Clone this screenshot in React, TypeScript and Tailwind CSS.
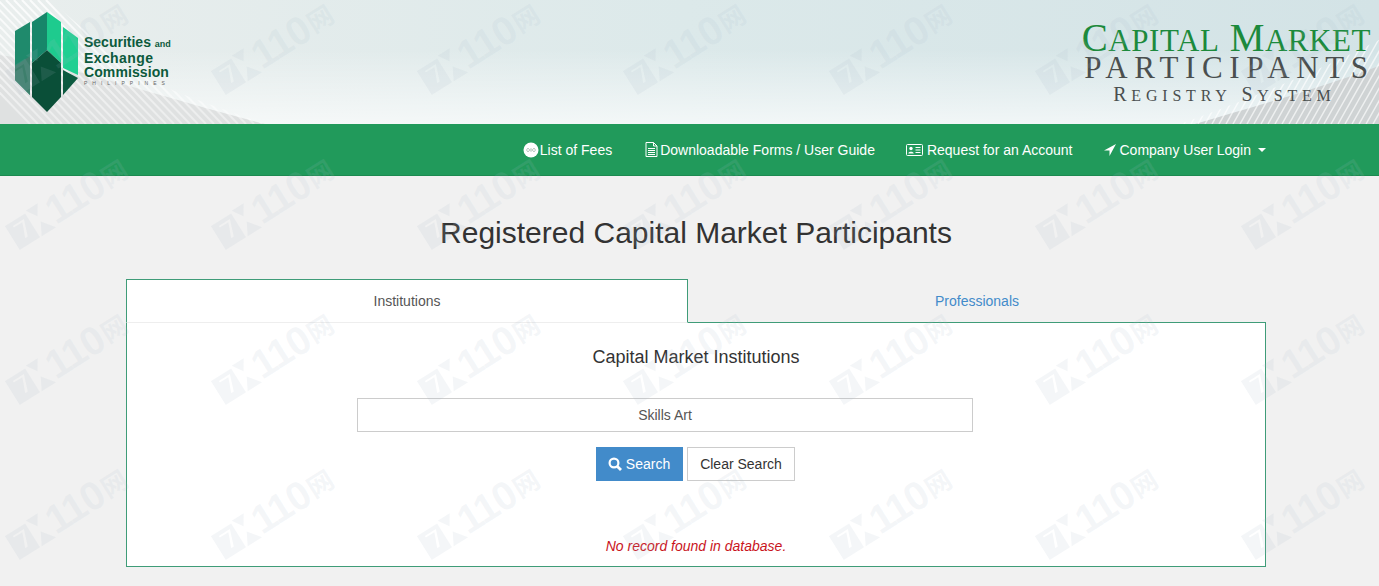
import React from 'react';

const SecLogo = () => (
  <svg width="64" height="101" viewBox="15 12 64 101" className="shrink-0">
    <polygon points="15,31 30,22 30,95 15,80" fill="#1f8a6c" />
    <polygon points="15,66 30,56 30,95 15,80" fill="#3d7f6c" />
    <polygon points="32,22 47,12 47,50 32,63" fill="#17866a" />
    <polygon points="47,12 61,22 61,63 47,50" fill="#1ecb8e" />
    <polygon points="63,27 78,38 78,75 63,68" fill="#20cf92" />
    <polygon points="63,70 78,78 63,95" fill="#0d5a40" />
    <polygon points="32,63 47,50 61,63 61,97 47,112 32,97" fill="#0a4f38" />
  </svg>
);

const Texture = () => (
  <svg width="1379" height="124" viewBox="0 0 1379 124" className="absolute inset-0">
    <defs>
      <linearGradient id="fadeLeft" x1="0" y1="0" x2="1" y2="0">
        <stop offset="0%" stopColor="#fff" stopOpacity="0.8" />
        <stop offset="100%" stopColor="#fff" stopOpacity="0.4" />
      </linearGradient>
      <linearGradient id="bottomFade" x1="0" y1="0" x2="0" y2="1">
        <stop offset="40%" stopColor="#fff" stopOpacity="0" />
        <stop offset="100%" stopColor="#fff" stopOpacity="0.65" />
      </linearGradient>
      <clipPath id="leftWave">
        <path d="M0 0 L50 0 L130 70 C170 92 220 108 265 124 L0 124 Z" />
      </clipPath>
      <clipPath id="rightWave">
        <path d="M1379 40 C1320 70 1260 95 1180 124 L1379 124 Z" />
      </clipPath>
    </defs>
    <rect width="1379" height="124" fill="url(#bottomFade)" />
    <path d="M0 55 C70 65 170 100 265 124 L0 124 Z" fill="#dfe1e1" />
    <g clipPath="url(#leftWave)" stroke="url(#fadeLeft)" strokeWidth="2">
      {Array.from({ length: 50 }, (_, i) => (
        <line key={i} x1={-90 + i * 8} y1={0} x2={30 + i * 8} y2={124} />
      ))}
    </g>
    <path d="M1379 66 C1320 88 1260 105 1195 124 L1379 124 Z" fill="#cfd3d4" />
    <g clipPath="url(#rightWave)" stroke="#ffffff" strokeOpacity="0.65" strokeWidth="1.5">
      {Array.from({ length: 36 }, (_, i) => (
        <line key={i} x1={1170 + i * 7} y1={124} x2={1240 + i * 7} y2={0} />
      ))}
    </g>
  </svg>
);

const Watermarks = () => (
  <div className="absolute left-[-35px] top-[-32px] z-10 grid grid-cols-[repeat(7,206px)] auto-rows-[155px] pointer-events-none">
    {Array.from({ length: 28 }, (_, i) => (
      <div key={i} className="flex items-center justify-center">
        <div className="flex items-center -rotate-[32deg] text-[#a9bccb]/[0.13]">
          <svg width="44" height="36" viewBox="0 0 44 36" className="shrink-0">
            <path
              fillRule="evenodd"
              d="M0 6 L24 6 L24 34 L0 34 Z M7 12 L17 12 L11 27 L14 27 L20 10 L7 10 Z"
              fill="currentColor"
            />
            <path d="M26 4 L40 4 L33 15 Z M33 21 L43 34 L26 34 Z" fill="currentColor" />
          </svg>
          <span className="text-[40px] leading-none font-bold font-['Liberation_Sans',sans-serif] tracking-tight">110</span>
          <span className="text-[26px] leading-none font-['Noto_Sans_CJK_SC',sans-serif] font-bold ml-0.5">网</span>
        </div>
      </div>
    ))}
  </div>
);

const NavLink = ({ icon, label, caret, className }: { icon: React.ReactNode; label: string; caret?: boolean; className?: string }) => (
  <a href="#" className={`flex items-center text-white text-sm ${className ?? ''}`}>
    {icon}
    {label}
    {caret && <span className="ml-[7px] mt-[1px] w-0 h-0 border-x-4 border-x-transparent border-t-4 border-t-white" />}
  </a>
);

export default function App() {
  return (
    <div className="relative h-[586px] w-[1379px] overflow-hidden bg-[#f1f1f1] font-['Liberation_Sans',Arial,sans-serif] text-[#333]">
      <header className="relative h-[124px] bg-gradient-to-r from-[#e9eeed] via-[#dce9ea] to-[#d3e3e6] overflow-hidden">
        <Texture />
        <div className="relative flex items-center justify-between h-full pl-[15px] pr-[2px]">
          <div className="flex items-center pt-[1px]">
            <SecLogo />
            <div className="ml-[5px] mt-[-4px] text-[#0c5a3c] font-bold">
              <div className="text-[14px] leading-[14px]">
                Securities <span className="text-[9px]">and</span>
              </div>
              <div className="text-[14px] leading-[14px] tracking-[0.4px]">Exchange</div>
              <div className="text-[14px] leading-[14px] tracking-[0.1px]">Commission</div>
              <div className="text-[5px] leading-[8px] font-normal tracking-[5px] text-[#666]">PHILIPPINES</div>
            </div>
          </div>
          <div className="flex flex-col items-center font-['Liberation_Serif',serif] mt-[2px]">
            <div className="text-[#1c8a3c] text-[39px] leading-[38px] tracking-[0.55px] mr-[6px]">
              C<span className="text-[31px]">APITAL</span> M<span className="text-[31px]">ARKET</span>
            </div>
            <div className="text-[#4a4f4f] text-[31px] leading-[28px] tracking-[6.6px] mt-[-6px]">PARTICIPANTS</div>
            <div className="text-[#4a4f4f] text-[20px] leading-[22px] tracking-[4.8px] mt-[1px] mr-[10px]">
              R<span className="text-[16px]">EGISTRY</span> S<span className="text-[16px]">YSTEM</span>
            </div>
          </div>
        </div>
      </header>

      <nav className="h-[52px] bg-[#219a5b] border-b border-[#1c8a50] flex items-center justify-end pr-[113px]">
        <NavLink
          label="List of Fees"
          icon={
            <svg width="16" height="16" viewBox="0 0 16 16" className="mr-[1px]">
              <circle cx="8" cy="8" r="7.5" fill="#fff" />
              <path d="M5 6 L3.5 8 L5 10 L8 6.5 L11 10 L12.5 8 L11 6 L8 9.5 Z" fill="none" stroke="#b9c9c0" strokeWidth="1" />
            </svg>
          }
        />
        <NavLink
          className="ml-[33px]"
          label="Downloadable Forms / User Guide"
          icon={
            <svg width="13" height="15" viewBox="0 0 13 15" className="mr-[2px]" fill="none" stroke="#fff">
              <path d="M1 .5 H8.5 L12 4 V14.5 H1 Z M8.5 .5 V4 H12" />
              <path d="M3 6.5 H10 M3 8.5 H10 M3 10.5 H10 M3 12.5 H10" />
            </svg>
          }
        />
        <NavLink
          className="ml-[31px]"
          label="Request for an Account"
          icon={
            <svg width="17" height="12" viewBox="0 0 17 12" className="mr-[4px]">
              <rect x="0.5" y="0.5" width="16" height="11" rx="1" fill="none" stroke="#fff" />
              <circle cx="5" cy="4.5" r="1.7" fill="#fff" />
              <path d="M2.3 9.5 C2.3 7 7.7 7 7.7 9.5 Z" fill="#fff" />
              <path d="M9.5 3.5 H14.5 M9.5 6 H14.5 M9.5 8.5 H14.5" stroke="#fff" strokeWidth="1" />
            </svg>
          }
        />
        <NavLink
          className="ml-[32px]"
          label="Company User Login"
          caret
          icon={
            <svg width="12" height="12" viewBox="0 0 12 12" className="mr-[3px]">
              <path d="M12 0 L0 6.5 H5.5 V12 Z" fill="#fff" />
            </svg>
          }
        />
      </nav>

      <main className="w-[1140px] ml-[126px]">
        <h2 className="text-[30px] leading-[33px] text-center mt-[40px] mb-[30px] text-[#333]">Registered Capital Market Participants</h2>

        <div className="flex h-[44px] text-sm">
          <div className="w-[562px] bg-white border border-[#3f9c78] border-b-[#eeeeee] flex items-center justify-center text-[#555]">Institutions</div>
          <div className="flex-1 border-b border-[#3f9c78] flex items-center justify-center text-[#428bca]">Professionals</div>
        </div>

        <section className="h-[244px] bg-white border border-t-0 border-[#3f9c78] flex flex-col items-center">
          <h4 className="text-lg leading-5 mt-[24px] text-[#333]">Capital Market Institutions</h4>
          <input
            readOnly
            value="Skills Art"
            className="w-[616px] h-[34px] mt-[31px] ml-[-62px] border border-[#ccc] bg-white text-center text-sm text-[#555] outline-none"
          />
          <div className="flex gap-1 mt-[15px] ml-[-2px] text-sm">
            <button className="flex items-center h-[34px] w-[87px] justify-center bg-[#428bca] border border-[#428bca] text-white">
              <svg width="14" height="14" viewBox="0 0 14 14" className="mr-[4px]" fill="none" stroke="#fff">
                <circle cx="6" cy="6" r="4.4" strokeWidth="2.2" />
                <path d="M9.4 9.4 L13 13" strokeWidth="2.8" />
              </svg>
              Search
            </button>
            <button className="h-[34px] w-[108px] pl-px bg-white border border-[#ccc] text-[#333]">Clear Search</button>
          </div>
          <p className="mt-[55px] text-sm italic text-[#c9141c]">No record found in database.</p>
        </section>
      </main>

      <Watermarks />
    </div>
  );
}
